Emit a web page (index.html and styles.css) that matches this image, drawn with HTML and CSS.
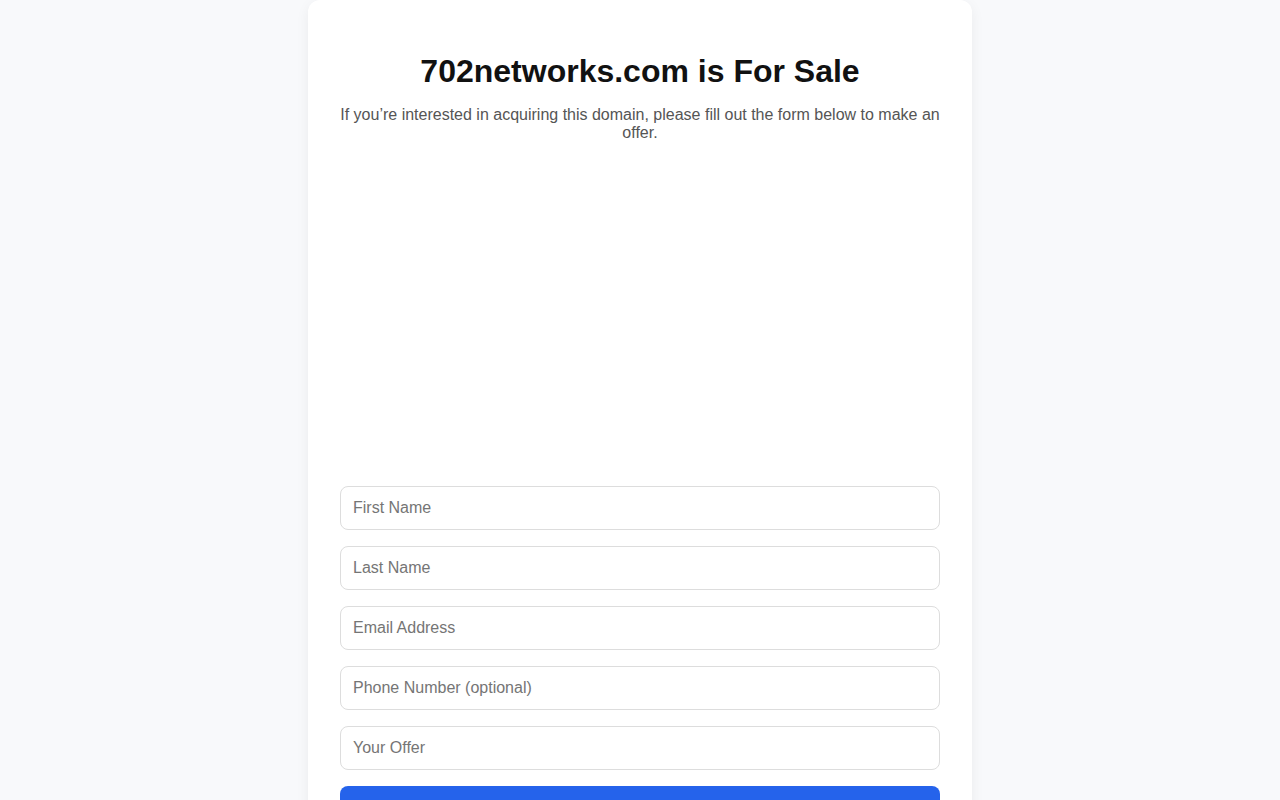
FILE: index.html
```html
<!DOCTYPE html>
<html lang="en">
<head>
    <meta charset="UTF-8">
    <meta name="viewport" content="width=device-width, initial-scale=1.0">
    <title>702networks.com is For Sale</title>
    <link rel="stylesheet" href="styles.css">
</head>
<body>
    <div class="container">
        <h1>702networks.com is For Sale</h1>
        <p class="intro">If you’re interested in acquiring this domain, please fill out the form below to make an offer.</p>
        <div class="offer-frame"></div>
        <form class="offer-form" action="">
            <input type="text" name="first_name" placeholder="First Name">
            <input type="text" name="last_name" placeholder="Last Name">
            <input type="email" name="email" placeholder="Email Address">
            <input type="tel" name="phone" placeholder="Phone Number (optional)">
            <input type="text" name="offer" placeholder="Your Offer">
            <button type="submit">Submit Offer</button>
        </form>
    </div>
</body>
</html>
```

FILE: styles.css
```css
*{
    margin:0;
    padding:0;
    box-sizing:border-box;
}
body{
    background-color:#f8f9fb;
    font-family:"Liberation Sans", Arial, sans-serif;
    color:#111;
}
.container{
    width:664px;
    margin:0 auto;
    padding:53px 32px 32px;
    background-color:#fff;
    border-radius:12px;
    box-shadow:0 4px 14px rgba(0, 0, 0, 0.06);
}
h1{
    font-size:32px;
    line-height:37px;
    text-align:center;
    font-weight:bold;
    margin-bottom:16px;
}
.intro{
    font-size:16px;
    line-height:18px;
    color:#555;
    text-align:center;
}
.offer-frame{
    height:344px;
}
.offer-form{
    display:flex;
    flex-direction:column;
    gap:16px;
}
input{
    height:44px;
    width:100%;
    padding:0 12px;
    border:1px solid #ddd;
    border-radius:8px;
    font-family:inherit;
    font-size:16px;
    color:#111;
}
input::placeholder{
    color:#757575;
}
button{
    height:44px;
    width:100%;
    background-color:#2563eb;
    color:#fff;
    font-family:inherit;
    font-size:16px;
    font-weight:bold;
    border:none;
    border-radius:8px;
    cursor:pointer;
}
```
